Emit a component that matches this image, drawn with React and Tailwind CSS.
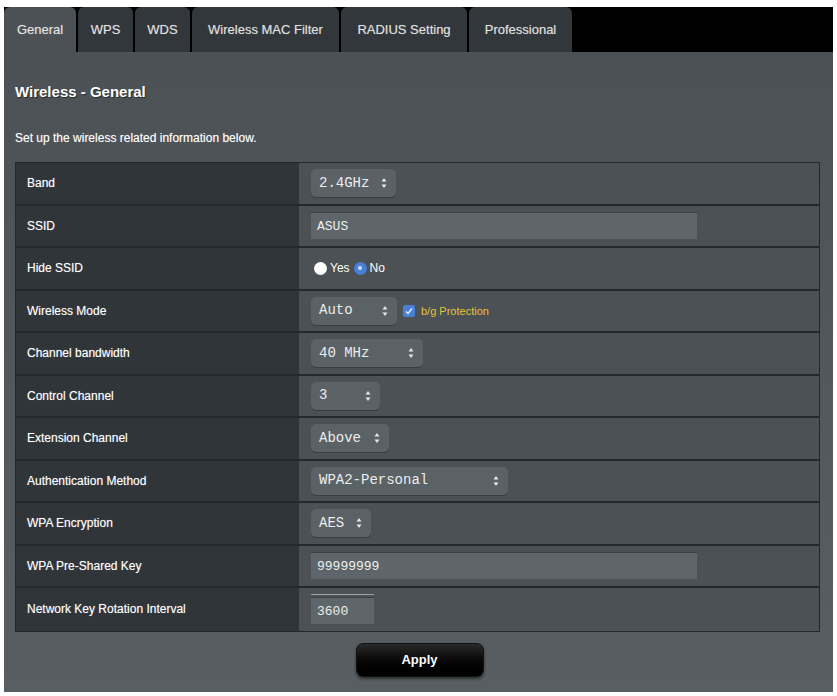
const tabs = ['General', 'WPS', 'WDS', 'Wireless MAC Filter', 'RADIUS Setting', 'Professional'];

const tabWidths = ['w-[72px]', 'w-[55px]', 'w-[55px]', 'w-[147px]', 'w-[126px]', 'w-[103px]'];

function Arrows() {
  return (
    <svg width="6" height="12" viewBox="0 0 6 12" className="shrink-0">
      <path d="M3 1 L5.5 4.5 H0.5 Z" fill="#e6e6e6" />
      <path d="M3 11 L5.5 7.5 H0.5 Z" fill="#e6e6e6" />
    </svg>
  );
}

function Select({ value, width }) {
  return (
    <div
      className={`flex h-[28px] items-center justify-between rounded-[5px] bg-[#5b6266] pr-[9px] pl-[8px] font-['Liberation_Mono',monospace] text-[14px] text-[#ececec] shadow-[0_1px_0_rgba(0,0,0,0.25)] ${width}`}
    >
      <span className="whitespace-pre">{value}</span>
      <Arrows />
    </div>
  );
}

function TextBox({ value, width }) {
  return (
    <div
      className={`flex h-[27px] items-center border-t border-[#3b4145] bg-[#5f666b] pl-[6px] font-['Liberation_Mono',monospace] text-[13px] text-[#eeeeee] ${width}`}
    >
      {value}
    </div>
  );
}

function Radio({ checked, label }) {
  return (
    <span className="flex items-center gap-[3px]">
      {checked ? (
        <span className="flex h-[13px] w-[13px] items-center justify-center rounded-full bg-[#4a7fd6]">
          <span className="h-[4px] w-[4px] rounded-full bg-[#cfe0ff]" />
        </span>
      ) : (
        <span className="h-[13px] w-[13px] rounded-full bg-white" />
      )}
      <span>{label}</span>
    </span>
  );
}

const rows = [
  { label: 'Band', field: <Select value="2.4GHz" width="w-[85px]" /> },
  { label: 'SSID', field: <TextBox value="ASUS" width="w-[386px]" /> },
  {
    label: 'Hide SSID',
    field: (
      <div className="flex items-center gap-[4px] pl-[3px] text-[12px] text-white">
        <Radio label="Yes" />
        <Radio checked label="No" />
      </div>
    ),
  },
  {
    label: 'Wireless Mode',
    field: (
      <div className="flex items-center gap-[6px]">
        <Select value="Auto" width="w-[86px]" />
        <span className="flex h-[12px] w-[12px] items-center justify-center rounded-[2px] bg-[#4a7fd6]">
          <svg width="8" height="8" viewBox="0 0 8 8">
            <path d="M1 4.5 L3 6.5 L7 1.5" stroke="#e8f0ff" strokeWidth="1.4" fill="none" />
          </svg>
        </span>
        <span className="text-[11px] text-[#e7c23a]">b/g Protection</span>
      </div>
    ),
  },
  { label: 'Channel bandwidth', field: <Select value="40 MHz" width="w-[112px]" /> },
  { label: 'Control Channel', field: <Select value="3" width="w-[69px]" /> },
  { label: 'Extension Channel', field: <Select value="Above" width="w-[78px]" /> },
  { label: 'Authentication Method', field: <Select value="WPA2-Personal" width="w-[197px]" /> },
  { label: 'WPA Encryption', field: <Select value="AES" width="w-[60px]" /> },
  { label: 'WPA Pre-Shared Key', field: <TextBox value="99999999" width="w-[386px]" /> },
  {
    label: 'Network Key Rotation Interval',
    field: (
      <div className="flex flex-col">
        <span className="mb-[2px] h-[1px] w-[63px] bg-[#9aa0a4]" />
        <TextBox value="3600" width="w-[63px]" />
      </div>
    ),
  },
];

export default function App() {
  return (
    <div className="h-[696px] w-[837px] bg-white pt-[7px] pl-[4px] font-['Liberation_Sans',Arial,sans-serif]">
      <div className="flex h-[685px] w-[829px] flex-col">
        {/* tab strip */}
        <div className="flex h-[45px] shrink-0 items-end gap-[2px] bg-black">
          {tabs.map((t, i) => (
            <div
              key={t}
              className={`flex h-[45px] items-center justify-center rounded-t-[6px] text-[13px] [text-shadow:0_0_1px_rgba(255,255,255,0.35)] ${tabWidths[i]} ${
                i === 0 ? 'bg-[#4b5155] text-[#e4e4e4]' : 'bg-[#32373b] text-[#e0e0e0]'
              }`}
            >
              {t}
            </div>
          ))}
        </div>

        <div className="flex flex-1 flex-col bg-gradient-to-b from-[#4b5155] to-[#585e62] px-[11px]">
          <h2 className="mt-[31px] text-[15px] leading-[18px] font-bold text-white [text-shadow:1px_1px_1px_rgba(0,0,0,0.5)]">
            Wireless - General
          </h2>
          <p className="mt-[30px] text-[12px] leading-[14px] text-white [text-shadow:0_0_1px_rgba(255,255,255,0.4)]">
            Set up the wireless related information below.
          </p>

          <div className="mt-[17px] w-[805px] border border-[#23282b] bg-[#4b5154]">
            {rows.map((r, i) => (
              <div
                key={r.label}
                className={`flex h-[42.5px] ${i < rows.length - 1 ? 'border-b-2 border-[#25292c]' : ''}`}
              >
                <div className="flex w-[283px] shrink-0 items-center bg-[#30353a] pl-[11px] text-[12px] text-white [text-shadow:0_0_1px_rgba(255,255,255,0.4)]">
                  {r.label}
                </div>
                <div className="flex flex-1 items-center pl-[12px]">{r.field}</div>
              </div>
            ))}
          </div>

          <div className="flex justify-center pt-[11px] pl-[2px]">
            <button className="h-[34px] w-[128px] rounded-[7px] border border-[#111] bg-gradient-to-b from-[#2a2a2a] to-[#000] text-[13px] font-bold text-white shadow-[0_2px_3px_rgba(0,0,0,0.5)]">
              Apply
            </button>
          </div>
        </div>
      </div>
    </div>
  );
}
